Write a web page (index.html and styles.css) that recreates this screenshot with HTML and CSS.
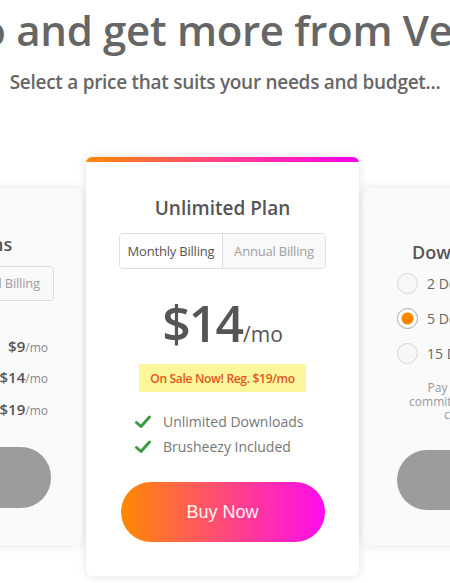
FILE: index.html
```html
<!DOCTYPE html>
<html lang="en">
<head>
<meta charset="utf-8">
<title>Pricing</title>
<link rel="stylesheet" href="styles.css">
</head>
<body>
<header class="hero">
  <h1 class="hero-title">Go Pro and get more from Vecteezy</h1>
  <p class="hero-sub">Select a price that suits your needs and budget...</p>
</header>
<main class="plans">
  <section class="card card-side card-left">
    <h2 class="card-title">Premium Plans</h2>
    <div class="toggle">
      <span class="toggle-opt is-active">Monthly Billing</span>
      <span class="toggle-opt">Annual Billing</span>
    </div>
    <ul class="tiers">
      <li class="tier"><span class="tier-name">2 Downloads / day</span><span class="tier-price"><b>$9</b><span class="per">/mo</span></span></li>
      <li class="tier"><span class="tier-name">5 Downloads / day</span><span class="tier-price"><b>$14</b><span class="per">/mo</span></span></li>
      <li class="tier"><span class="tier-name">15 Downloads / day</span><span class="tier-price"><b>$19</b><span class="per">/mo</span></span></li>
    </ul>
    <button class="btn btn-gray">Buy Now</button>
  </section>

  <section class="card card-main">
    <div class="card-bar"></div>
    <h2 class="card-title">Unlimited Plan</h2>
    <div class="toggle">
      <span class="toggle-opt is-active">Monthly Billing</span>
      <span class="toggle-opt">Annual Billing</span>
    </div>
    <div class="price"><span class="price-num">$14</span><span class="price-per">/mo</span></div>
    <div class="sale"><span class="sale-text">On Sale Now! Reg. $19/mo</span></div>
    <ul class="features">
      <li class="feature"><svg class="check" viewBox="0 0 16 14" width="16" height="14"><path d="M1.5 7.5 L6 11.5 L14.5 2" fill="none" stroke="#3f9b43" stroke-width="3" stroke-linecap="round" stroke-linejoin="round"/></svg><span>Unlimited Downloads</span></li>
      <li class="feature"><svg class="check" viewBox="0 0 16 14" width="16" height="14"><path d="M1.5 7.5 L6 11.5 L14.5 2" fill="none" stroke="#3f9b43" stroke-width="3" stroke-linecap="round" stroke-linejoin="round"/></svg><span>Brusheezy Included</span></li>
    </ul>
    <button class="btn btn-grad">Buy Now</button>
  </section>

  <section class="card card-side card-right">
    <h2 class="card-title">Download Packages</h2>
    <ul class="radios">
      <li class="radio"><span class="radio-dot"></span><span>2 Downloads</span></li>
      <li class="radio"><span class="radio-dot is-checked"></span><span>5 Downloads</span></li>
      <li class="radio"><span class="radio-dot"></span><span>15 Downloads</span></li>
    </ul>
    <p class="note">Pay as you go, there is no<br>commitment. Downloads never,<br>carry over monthly.</p>
    <button class="btn btn-gray">Buy Now</button>
  </section>
</main>
</body>
</html>
```

FILE: styles.css
```css
html, body {
  margin: 0;
  padding: 0;
  background: #ffffff;
  overflow: hidden;
}
body {
  width: 450px;
  height: 583px;
  font-family: "Open Sans", "Noto Sans", sans-serif;
  color: #666;
}
.hero {
  display: flex;
  flex-direction: column;
  align-items: center;
}
.hero-title {
  margin: 4px 0 0;
  font-size: 42px;
  line-height: 52px;
  font-weight: 600;
  white-space: nowrap;
  color: #666;
  letter-spacing: -0.3px;
}
.hero-sub {
  margin: 13px 0 0;
  font-size: 19px;
  line-height: 26px;
  font-weight: 600;
  color: #666;
  white-space: nowrap;
  letter-spacing: -0.28px;
}
.plans {
  margin-top: 62px;
  display: flex;
  justify-content: center;
  align-items: center;
  gap: 3px;
  padding-right: 5px;
}
.card {
  flex: 0 0 273px;
  width: 273px;
  box-sizing: border-box;
  display: flex;
  flex-direction: column;
  align-items: center;
  border-radius: 6px;
}
.card-side {
  background: #fbfafb;
  box-shadow: 0 0 12px rgba(0, 0, 0, 0.10);
  padding: 0 29px;
}
.card-main {
  position: relative;
  z-index: 1;
  background: #fff;
  box-shadow: 0 0 10px rgba(0, 0, 0, 0.12);
  overflow: hidden;
  padding: 0 33px 34px;
}
.card-bar {
  align-self: stretch;
  height: 5px;
  margin: 0 -33px;
  background: linear-gradient(90deg, #ff8a00, #ff3f8a 50%, #ff00ea);
}
.card-title {
  margin: 34px 0 0;
  font-size: 19px;
  line-height: 24px;
  font-weight: 600;
  color: #555;
  white-space: nowrap;
}
.card-left .card-title { margin-top: 44px; font-size: 18px; }
.card-right .card-title { margin-top: 52px; font-size: 18px; }
.toggle {
  margin-top: 13px;
  display: flex;
  width: 207px;
  height: 36px;
  box-sizing: border-box;
  border: 1px solid #dedede;
  border-radius: 4px;
  overflow: hidden;
}
.card-left .toggle { margin-top: 10px; height: 35px; width: 215px; }
.toggle-opt {
  flex: 1;
  display: flex;
  align-items: center;
  justify-content: center;
  font-size: 13px;
  color: #a0a0a0;
  background: #f9f9f9;
  white-space: nowrap;
  letter-spacing: -0.2px;
}
.toggle-opt.is-active {
  background: #fff;
  color: #555;
  border-right: 1px solid #dedede;
}
.price {
  margin-top: 29px;
  display: flex;
  align-items: baseline;
  line-height: 1;
  color: #555;
}
.price-num {
  font-size: 50px;
  line-height: 50px;
  font-weight: 600;
  letter-spacing: -2px;
}
.price-per {
  font-size: 21px;
  margin-left: 1px;
}
.sale {
  margin-top: 16px;
  width: 167px;
  height: 28px;
  display: flex;
  align-items: center;
  justify-content: center;
  background: #fbf79a;
}
.sale-text {
  font-size: 12px;
  font-weight: 600;
  color: #e2561d;
  letter-spacing: -0.3px;
  white-space: nowrap;
}
.features {
  list-style: none;
  margin: 17px 0 0;
  padding: 0;
  align-self: stretch;
  padding-left: 16px;
}
.feature {
  display: flex;
  align-items: center;
  height: 25px;
  font-size: 14px;
  color: #777;
  white-space: nowrap;
}
.check {
  margin-right: 12px;
  flex: 0 0 auto;
}
.btn {
  border: 0;
  border-radius: 30px;
  width: 204px;
  height: 60px;
  font-family: "Liberation Sans", Arial, sans-serif;
  font-size: 18px;
  color: #fff;
  flex: 0 0 auto;
}
.btn-grad {
  margin-top: 23px;
  background: linear-gradient(90deg, #ff8a00 0%, #ff4a7a 50%, #ff0bee 100%);
  color: #fff3f3;
}
.btn-gray {
  background: #9c9c9c;
  color: #9c9c9c;
}
.card-left .btn-gray { margin-top: 23px; height: 61px; margin-bottom: 37px; width: 208px; }
.card-right .btn-gray { margin-top: 28px; margin-bottom: 35px; }
.tiers {
  list-style: none;
  margin: 29px 0 0;
  padding: 0;
  align-self: stretch;
}
.tier {
  height: 31.5px;
  display: flex;
  align-items: center;
  justify-content: space-between;
  font-size: 13px;
  color: #888;
  padding-right: 6px;
}
.tier-price b {
  font-size: 15px;
  font-weight: 600;
  color: #555;
}
.per {
  font-size: 12px;
  color: #888;
}
.radios {
  list-style: none;
  margin: 2px 0 0;
  padding: 0;
  align-self: stretch;
  padding-left: 6px;
}
.radio {
  height: 35px;
  display: flex;
  align-items: center;
  font-size: 14px;
  color: #666;
  white-space: nowrap;
}
.radio-dot {
  width: 21px;
  height: 21px;
  box-sizing: border-box;
  border-radius: 50%;
  border: 1px solid #d6d6d6;
  background: #f7f7f7;
  margin-right: 9px;
  flex: 0 0 auto;
}
.radio-dot.is-checked {
  border-color: #a8a8a8;
  background: radial-gradient(circle, #ff8500 0 5.5px, #fff 6.5px);
}
.note {
  margin: 10px 0 0;
  font-size: 12px;
  line-height: 13.5px;
  color: #999;
  text-align: center;
  white-space: nowrap;
}
```
